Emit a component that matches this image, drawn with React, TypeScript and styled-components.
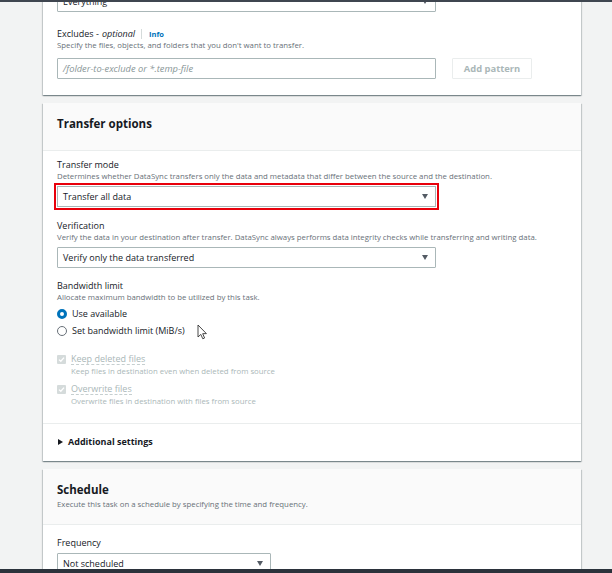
import React from "react";
import styled, { createGlobalStyle } from "styled-components";

const GlobalStyle = createGlobalStyle`
  html, body { margin: 0; padding: 0; }
  body {
    font-family: "Open Sans", "Noto Sans", sans-serif;
    background: #f2f3f3;
    color: #16191f;
  }
  * { box-sizing: border-box; }
`;

const Frame = styled.div`
  width: 612px;
  height: 573px;
  display: flex;
  flex-direction: column;
  border-top: 2px solid #3f4650;
  border-bottom: 4px solid #2b323b;
  background: #f2f3f3;
  overflow: hidden;
`;

const Viewport = styled.div`
  flex: 1;
  overflow: hidden;
  position: relative;
`;

const Content = styled.div`
  margin-top: -11px;
  padding: 0 31px 0 43px;
  display: flex;
  flex-direction: column;
  gap: 8px;
`;

const Card = styled.section`
  background: #fff;
  box-shadow: 0 1px 1px 0 rgba(0, 28, 36, 0.3), 1px 1px 1px 0 rgba(0, 28, 36, 0.15),
    -1px 1px 1px 0 rgba(0, 28, 36, 0.15);
  position: relative;
`;

const CardHeader = styled.header<{ $pb: number }>`
  background: #fafafa;
  border-bottom: 1px solid #eaeded;
  padding: 13px 14px ${(p) => p.$pb}px;
`;

const CardTitle = styled.h2`
  margin: 0;
  font-size: 11.5px;
  line-height: 16px;
  font-weight: 700;
  color: #16191f;
`;

const HeaderDesc = styled.p`
  margin: 1px 0 0;
  font-size: 7.8px;
  line-height: 11px;
  color: #687078;
`;

const CardBody = styled.div<{ $pt: number; $pb: number }>`
  padding: ${(p) => p.$pt}px 14px ${(p) => p.$pb}px;
  display: flex;
  flex-direction: column;
  position: relative;
`;

const Field = styled.div<{ $mt?: number }>`
  display: flex;
  flex-direction: column;
  margin-top: ${(p) => p.$mt ?? 0}px;
`;

const Label = styled.div`
  font-size: 9px;
  line-height: 12px;
  color: #16191f;
  display: flex;
  align-items: center;
`;

const Optional = styled.i`
  margin-left: 3px;
`;

const Separator = styled.span`
  width: 1px;
  height: 10px;
  background: #d5dbdb;
  margin: 0 7px 0 6px;
`;

const InfoLink = styled.a`
  font-size: 7.5px;
  font-weight: 700;
  color: #0073bb;
  text-decoration: none;
`;

const Desc = styled.div`
  font-size: 7.8px;
  line-height: 11px;
  color: #687078;
  white-space: nowrap;
`;

const SelectBox = styled.div<{ $w: number; $mt?: number; $highlight?: boolean }>`
  width: ${(p) => p.$w}px;
  height: 21px;
  margin-top: ${(p) => p.$mt ?? 4}px;
  border: 1px solid #aab7b8;
  border-radius: ${(p) => (p.$highlight ? 0 : 1)}px;
  background: #fff;
  display: flex;
  align-items: center;
  justify-content: space-between;
  padding: 0 7px 0 5px;
  font-size: 9px;
  color: #16191f;
  outline: ${(p) => (p.$highlight ? "2px solid #e8000b" : "none")};
  outline-offset: 1px;
`;

const Caret = styled.span`
  width: 0;
  height: 0;
  border-left: 3.5px solid transparent;
  border-right: 3.5px solid transparent;
  border-top: 5px solid #545b64;
`;

const InputRow = styled.div`
  display: flex;
  gap: 16px;
  margin-top: 7px;
`;

const TextInput = styled.div`
  width: 379px;
  height: 21px;
  border: 1px solid #aab7b8;
  border-radius: 1px;
  display: flex;
  align-items: center;
  padding: 0 5px;
  font-size: 9.3px;
  font-style: italic;
  color: #879596;
`;

const DisabledButton = styled.div`
  width: 80px;
  height: 21px;
  border: 1px solid #eaeded;
  border-radius: 1px;
  display: flex;
  align-items: center;
  justify-content: center;
  font-size: 9.4px;
  font-weight: 700;
  color: #aab7b8;
`;

const RadioGroup = styled.div`
  display: flex;
  flex-direction: column;
  margin-top: 2px;
`;

const RadioRow = styled.div`
  height: 17px;
  display: flex;
  align-items: center;
  gap: 5px;
  font-size: 9px;
  color: #16191f;
`;

const RadioDot = styled.span<{ $on?: boolean }>`
  width: 10px;
  height: 10px;
  border-radius: 50%;
  background: #fff;
  border: ${(p) => (p.$on ? "3px solid #0073bb" : "1px solid #687078")};
  flex: none;
`;

const CheckList = styled.div`
  display: flex;
  flex-direction: column;
  gap: 5px;
  margin-top: 13px;
`;

const CheckItem = styled.div`
  display: grid;
  grid-template-columns: 9px 1fr;
  column-gap: 5px;
  align-items: center;
`;

const CheckBox = styled.span`
  width: 9px;
  height: 9px;
  border-radius: 1px;
  background: #d5dbdb;
  display: flex;
  align-items: center;
  justify-content: center;
`;

const CheckLabel = styled.span`
  font-size: 9px;
  color: #aab7b8;
  justify-self: start;
  border-bottom: 1px dashed #c6cfd0;
  line-height: 11px;
  margin: 1px 0;
`;

const CheckDesc = styled.span`
  grid-column: 2;
  font-size: 7.8px;
  line-height: 11px;
  color: #aab7b8;
`;

const Expander = styled.div`
  border-top: 1px solid #eaeded;
  height: 38px;
  display: flex;
  align-items: center;
  gap: 5px;
  padding-left: 15px;
  padding-bottom: 2px;
  font-size: 9px;
  font-weight: 700;
  color: #16191f;
`;

const RightCaret = styled.span`
  width: 0;
  height: 0;
  border-top: 3.5px solid transparent;
  border-bottom: 3.5px solid transparent;
  border-left: 5px solid #16191f;
`;

const Pointer = styled.svg`
  position: absolute;
  left: 154px;
  top: 173px;
`;

const Check = () => (
  <svg width="7" height="7" viewBox="0 0 7 7">
    <path d="M1 3.6 L2.8 5.3 L6 1.6" fill="none" stroke="#fff" strokeWidth="1.3" />
  </svg>
);

export default function App() {
  return (
    <>
      <GlobalStyle />
      <Frame>
        <Viewport>
          <Content>
            <Card>
              <CardBody $pt={0} $pb={16}>
                <SelectBox $w={379} $mt={0}>
                  <span>Everything</span>
                  <Caret />
                </SelectBox>
                <Field $mt={16}>
                  <Label>
                    Excludes -<Optional>optional</Optional>
                    <Separator />
                    <InfoLink>Info</InfoLink>
                  </Label>
                  <Desc>Specify the files, objects, and folders that you don't want to transfer.</Desc>
                  <InputRow>
                    <TextInput>/folder-to-exclude or *.temp-file</TextInput>
                    <DisabledButton>Add pattern</DisabledButton>
                  </InputRow>
                </Field>
              </CardBody>
            </Card>

            <Card>
              <CardHeader $pb={18}>
                <CardTitle>Transfer options</CardTitle>
              </CardHeader>
              <CardBody $pt={8} $pb={16}>
                <Field>
                  <Label>Transfer mode</Label>
                  <Desc>
                    Determines whether DataSync transfers only the data and metadata that differ between the
                    source and the destination.
                  </Desc>
                  <SelectBox $w={379} $highlight>
                    <span>Transfer all data</span>
                    <Caret />
                  </SelectBox>
                </Field>
                <Field $mt={13}>
                  <Label>Verification</Label>
                  <Desc>
                    Verify the data in your destination after transfer. DataSync always performs data integrity
                    checks while transferring and writing data.
                  </Desc>
                  <SelectBox $w={379}>
                    <span>Verify only the data transferred</span>
                    <Caret />
                  </SelectBox>
                </Field>
                <Field $mt={12}>
                  <Label>Bandwidth limit</Label>
                  <Desc>Allocate maximum bandwidth to be utilized by this task.</Desc>
                  <RadioGroup>
                    <RadioRow>
                      <RadioDot $on />
                      Use available
                    </RadioRow>
                    <RadioRow>
                      <RadioDot />
                      Set bandwidth limit (MiB/s)
                    </RadioRow>
                  </RadioGroup>
                </Field>
                <CheckList>
                  <CheckItem>
                    <CheckBox>
                      <Check />
                    </CheckBox>
                    <CheckLabel>Keep deleted files</CheckLabel>
                    <CheckDesc>Keep files in destination even when deleted from source</CheckDesc>
                  </CheckItem>
                  <CheckItem>
                    <CheckBox>
                      <Check />
                    </CheckBox>
                    <CheckLabel>Overwrite files</CheckLabel>
                    <CheckDesc>Overwrite files in destination with files from source</CheckDesc>
                  </CheckItem>
                </CheckList>
                <Pointer width="11" height="16" viewBox="0 0 11 16">
                  <path
                    d="M1 1 L1 13 L3.8 10.4 L5.8 14.8 L7.6 14 L5.7 9.7 L9.4 9.6 Z"
                    fill="#fff"
                    stroke="#333"
                    strokeWidth="0.9"
                    strokeLinejoin="round"
                  />
                </Pointer>
              </CardBody>
              <Expander>
                <RightCaret />
                Additional settings
              </Expander>
            </Card>

            <Card>
              <CardHeader $pb={14}>
                <CardTitle>Schedule</CardTitle>
                <HeaderDesc>Execute this task on a schedule by specifying the time and frequency.</HeaderDesc>
              </CardHeader>
              <CardBody $pt={12} $pb={16}>
                <Field>
                  <Label>Frequency</Label>
                  <SelectBox $w={214}>
                    <span>Not scheduled</span>
                    <Caret />
                  </SelectBox>
                </Field>
              </CardBody>
            </Card>
          </Content>
        </Viewport>
      </Frame>
    </>
  );
}
